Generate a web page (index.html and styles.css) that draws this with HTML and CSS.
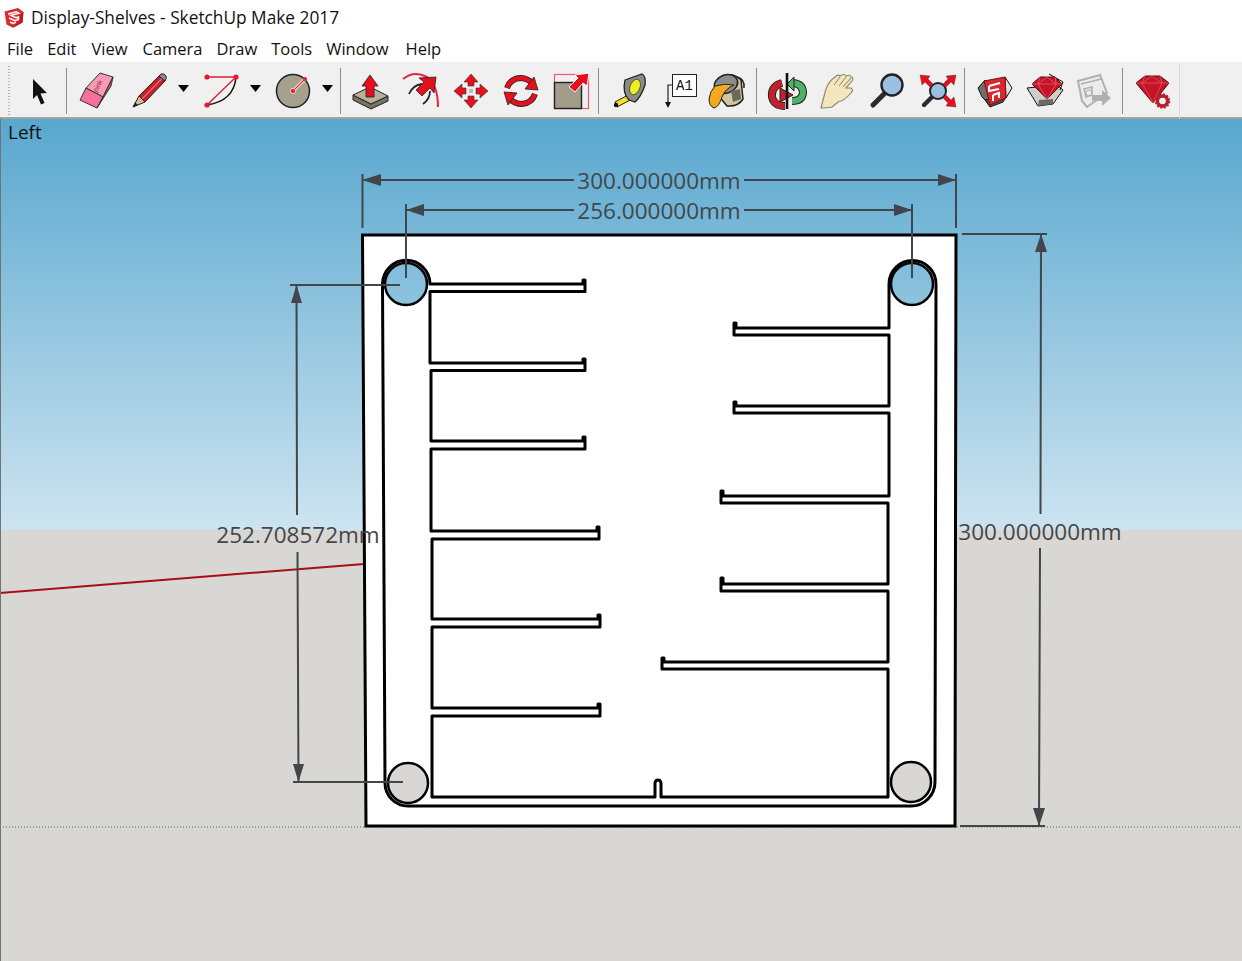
FILE: index.html
```html
<!DOCTYPE html>
<html lang="en">
<head>
<meta charset="utf-8">
<title>Display-Shelves - SketchUp Make 2017</title>
<link rel="stylesheet" href="styles.css">
</head>
<body>
<div class="app">
  <header class="titlebar">
    <svg class="logo" viewBox="0 0 20 20"><path d="M0.500 3.500 L14 0 L19.500 4 L18.500 14.500 L9 19.800 L2.500 16.500 Z" fill="#dc2a30"/><path d="M9 19.800 L18.500 14.500 L19.500 4 L16 6 L15 13 Z" fill="#b81c24"/><path d="M4 6 L12.500 3.800 L15 5.200 L7 7.400 L12 9.800 L14.500 9 V11.500 L11 12.800 L5 10 M6 14 L9 15.500 L12 14.300" fill="none" stroke="#fff" stroke-width="1.500"/></svg>
    <span>Display-Shelves - SketchUp Make 2017</span>
  </header>
  <nav class="menubar">
    <span class="m-file">File</span><span class="m-edit">Edit</span><span class="m-view">View</span><span class="m-camera">Camera</span><span class="m-draw">Draw</span><span class="m-tools">Tools</span><span class="m-window">Window</span><span class="m-help">Help</span>
  </nav>
  <div class="toolbar">
    <div class="gripper"></div>
    <svg class="tool t-select" viewBox="0 0 40 40"><path d="M14 8 L28 22 L21.5 22.5 L25.5 32 L22 33.5 L18 24 L14 28 Z" fill="#111"/></svg>
    <div class="sep s1"></div>
    <svg class="tool t-eraser" viewBox="0 0 40 40"><path d="M24 2 L37 6 L27 26 L10 17 Z" fill="#fb9ab4" stroke="#333"/><path d="M10 17 L27 26 L21 37 L4 29 Z" fill="#f6719a" stroke="#333"/><path d="M37 6 L35 15 L21 37 L27 26 Z" fill="#c9557a" stroke="#333"/><text class="pink" transform="translate(24 16) rotate(-62)">pink</text></svg>
    <svg class="tool t-pencil" viewBox="0 0 40 40"><path d="M9 25 L29 5 L35 10 L15 31 Z" fill="#c4202c" stroke="#222"/><path d="M12 28 L32 7.5" stroke="#e8616a" stroke-width="1.5"/><path d="M29 5 L31 3 Q34 2 36 5 Q37 7 35 10 Z" fill="#8d8d8d" stroke="#222"/><path d="M3 36 L9 25 L15 31 Z" fill="#d7bd8e" stroke="#222"/><path d="M3 36 L5 31.5 L8 34 Z" fill="#222"/></svg>
    <div class="drop d1"></div>
    <svg class="tool t-arc" viewBox="0 0 40 40"><path d="M5 6 H34 L5 34" fill="none" stroke="#e01b35" stroke-width="1.4"/><path d="M34 6 Q32 30 5 34" fill="none" stroke="#111" stroke-width="1.5"/><circle cx="5" cy="6" r="2.6" fill="#e01b35"/><circle cx="34" cy="6" r="2.6" fill="#e01b35"/><circle cx="5" cy="34" r="2.6" fill="#e01b35"/></svg>
    <div class="drop d2"></div>
    <svg class="tool t-circle" viewBox="0 0 40 40"><circle cx="20" cy="20" r="16.5" fill="#a5a18c" stroke="#222" stroke-width="1.5"/><path d="M20 20 L32 8" stroke="#fff" stroke-width="3"/><path d="M20 20 L32 8" stroke="#e01b35" stroke-width="1.3"/><circle cx="20" cy="20" r="2.6" fill="#e01b35" stroke="#fff" stroke-width=".7"/><circle cx="32" cy="8" r="2" fill="#e01b35"/></svg>
    <div class="drop d3"></div>
    <div class="sep s2"></div>
    <svg class="tool t-push" viewBox="0 0 40 40"><path d="M2 24 V29 L20 38 L37 30 V25 L20 33 Z" fill="#77745f" stroke="#222"/><path d="M2 24 L19 16 L37 25 L20 33 Z" fill="#b5b19b" stroke="#222"/><path d="M19 4 L27 15 L23 15 V26 L15 26 V15 L11 15 Z" fill="#e5101c" stroke="#222" stroke-width=".8"/></svg>
    <svg class="tool t-follow" viewBox="0 0 40 40"><path d="M1 8 Q12 -1 25 6 Q36 14 36 36" fill="none" stroke="#e8253c" stroke-width="2"/><path d="M7 23 Q11 14 20 13 M21 33 Q28 28 28 20" fill="none" stroke="#222" stroke-width="1.8"/><path d="M34 6 L32 22 L28 17 L20 25 L14 19 L22 11 L17 7 Z" fill="#e5101c" stroke="#222" stroke-width=".8"/></svg>
    <svg class="tool t-move" viewBox="0 0 40 40"><g fill="#e5101c" stroke="#333" stroke-width=".6"><path d="M20 3 L27 11 L23 11 V15 H17 V11 H13 Z"/><path d="M20 37 L27 29 L23 29 V25 H17 V29 H13 Z"/><path d="M3 20 L11 13 V17 H15 V23 H11 V27 Z"/><path d="M37 20 L29 13 V17 H25 V23 H29 V27 Z"/></g><rect x="18" y="18" width="4" height="4" fill="#bbb"/></svg>
    <svg class="tool t-rotate" viewBox="0 0 40 40"><path d="M6 17 Q9 8 19 7 Q26 7 31 12" fill="none" stroke="#222" stroke-width="6"/><path d="M6 17 Q9 8 19 7 Q26 7 31 12" fill="none" stroke="#e5101c" stroke-width="4.4"/><path d="M37 19 L24 18 L33 6 Z" fill="#e5101c" stroke="#222" stroke-width=".8"/><path d="M34 23 Q31 32 21 33 Q14 33 9 28" fill="none" stroke="#222" stroke-width="6"/><path d="M34 23 Q31 32 21 33 Q14 33 9 28" fill="none" stroke="#e5101c" stroke-width="4.4"/><path d="M3 21 L16 22 L7 34 Z" fill="#e5101c" stroke="#222" stroke-width=".8"/></svg>
    <svg class="tool t-scale" viewBox="0 0 40 40"><rect x="2.5" y="3.5" width="34" height="34" fill="none" stroke="#ec5a70" stroke-width="1.2"/><rect x="2.5" y="11.5" width="27" height="26" fill="#a19d88" stroke="#222" stroke-width="1.4"/><path d="M37 2 L35 15 L31 12 L23 21 L17 16 L26 7 L23 4 Z" fill="#e5101c" stroke="#fff" stroke-width="1"/></svg>
    <div class="sep s3"></div>
    <svg class="tool t-tape" viewBox="0 0 40 40"><path d="M5 31 L20 23 L22 28 L7 36 Z" fill="#f2e31c" stroke="#222"/><circle cx="6" cy="34" r="2.2" fill="#111"/><path d="M15 9 L32 3 Q36 5 35 14 Q31 26 25 31 L19 29 Q12 22 15 9 Z" fill="#8c8c84" stroke="#222" stroke-width="1.3"/><ellipse cx="25" cy="16" rx="5" ry="8" transform="rotate(22 25 16)" fill="#eef01e" stroke="#555"/></svg>
    <svg class="tool t-text" viewBox="0 0 40 40"><rect x="10.5" y="3.5" width="24" height="22" fill="#fff" stroke="#222"/><text class="a1" x="22.5" y="19">A1</text><path d="M10 14 H6 V31" fill="none" stroke="#222" stroke-width="1.2"/><path d="M3 31 H9 L6 37 Z" fill="#111"/></svg>
    <svg class="tool t-paint" viewBox="0 0 40 40"><path d="M15 5 Q27 1 34 9 L36 28 Q31 36 20 35 L11 24 Z" fill="#cfc7a2" stroke="#222" stroke-width="1.5"/><ellipse cx="19" cy="13" rx="12" ry="9" transform="rotate(-20 19 13)" fill="#8b8f8c" stroke="#222" stroke-width="1.5"/><path d="M30 6 Q38 8 37 17" fill="none" stroke="#222" stroke-width="1.5"/><path d="M8 15 Q18 12 27 14 Q18 18 15 26 Q12 36 7 37 Q2 35 2 28 Q3 20 8 15 Z" fill="#f4a81d" stroke="#222"/><path d="M24 20 L33 18 L34 28 L26 31 Z" fill="#6f6a55"/></svg>
    <div class="sep s4"></div>
    <svg class="tool t-orbit" viewBox="0 0 40 40"><path d="M26 12 Q36 13 36 22 Q35 30 25 30" fill="none" stroke="#222" stroke-width="8"/><path d="M26 12 Q36 13 36 22 Q35 30 25 30" fill="none" stroke="#4db268" stroke-width="6"/><path d="M27 6 V20 L20 13 Z" fill="#4db268" stroke="#222"/><path d="M15 12 Q4 15 5 26 Q7 35 18 35" fill="none" stroke="#222" stroke-width="8"/><path d="M15 12 Q4 15 5 26 Q7 35 18 35" fill="none" stroke="#c4202c" stroke-width="6"/><path d="M13 17 L26 24 L13 31 Z" fill="#c4202c" stroke="#222"/><path d="M20 2 V38" stroke="#111" stroke-width="2.6"/></svg>
    <svg class="tool t-pan" viewBox="0 0 40 40"><path d="M3 37 Q6 25 8 18 Q11 10 17 6 Q20 3 22 5 Q26 2 28 5 Q32 3 33 6 Q36 6 34 10 L28 17 L33 17 Q36 19 33 22 Q26 30 20 31 L14 36 Q8 37 3 37 Z" fill="#f3e5bd" stroke="#8a8468" stroke-width="1.1"/><path d="M16 14 L22 6 M21 15 L28 6 M25 16 L33 7" fill="none" stroke="#8a8468"/></svg>
    <svg class="tool t-zoom" viewBox="0 0 40 40"><path d="M17 23 L6 34" stroke="#2b2b2b" stroke-width="5" stroke-linecap="round"/><circle cx="25" cy="14" r="10.5" fill="#9cc0e2" stroke="#222" stroke-width="2.4"/></svg>
    <svg class="tool t-extents" viewBox="0 0 40 40"><path d="M14 26 L6 34" stroke="#2b2b2b" stroke-width="4.4" stroke-linecap="round"/><circle cx="20" cy="20" r="8" fill="#9cc0e2" stroke="#222" stroke-width="2"/><g fill="#e5101c" stroke="#333" stroke-width=".4"><path d="M2 4 L12 5 L10 8 L15 13 L12 16 L7 11 L4 14 Z"/><path d="M38 4 L28 5 L30 8 L25 13 L28 16 L33 11 L36 14 Z"/><path d="M38 36 L28 35 L30 32 L25 27 L28 24 L33 29 L36 26 Z"/></g></svg>
    <div class="sep s5"></div>
    <svg class="tool t-warehouse" viewBox="0 0 40 40"><path d="M3 17 L10 9 L15 34 L7 26 Z" fill="#6f6f6a" stroke="#111"/><path d="M30 6 L37 17 L31 27 Z" fill="#e6e4da" stroke="#111"/><path d="M10 29 L15 36 L28 31 L31 26 Z" fill="#55534a" stroke="#111"/><path d="M9 10 L30 6 L31 27 L15 34 Z" fill="#d8272e" stroke="#7a1116"/><path d="M14 15 L25 12 M14 15 V20 L24 18 M18 24 L24 22 V27 M18 24 V30" fill="none" stroke="#fff" stroke-width="2"/></svg>
    <svg class="tool t-extwh" viewBox="0 0 40 40"><path d="M2 17 L13 35 L28 33 L38 19 L32 14 Z" fill="#cfcfc8" stroke="#111"/><path d="M13 35 L28 33 V28 L14 29 Z" fill="#6a6a62"/><path d="M24 3 L38 11 L35 19" fill="none" stroke="#111"/><path d="M7 13 L15 6 H30 L37 13 L22 28 Z" fill="#c4142a" stroke="#511"/><path d="M7 13 H37 M15 6 L13 13 L22 28 L31 13 L30 6 M13 13 L22 6 L31 13" fill="none" stroke="#ef5a66" stroke-width=".8"/></svg>
    <svg class="tool t-share" viewBox="0 0 40 40"><path d="M3 10 L25 4 L32 22 L12 36 L7 30 Z" fill="#ebebeb" stroke="#b0b0b0" stroke-width="2"/><path d="M6 13 L26 8 M9 18 L17 16 V24 L11 26 Z" fill="none" stroke="#b0b0b0" stroke-width="1.6"/><circle cx="14" cy="22" r="3" fill="none" stroke="#b0b0b0"/><path d="M17 24 H27 V19 L36 27 L27 35 V30 H17 Z" fill="#b0b0b0"/></svg>
    <div class="sep s6"></div>
    <svg class="tool t-ruby" viewBox="0 0 40 40"><path d="M3 12 L12 5 H27 L36 12 L20 32 Z" fill="#c4142a" stroke="#5a0d14"/><path d="M3 12 H36 M12 5 L9 12 L20 32 L29 12 L27 5 M9 12 L19 5 L29 12" fill="none" stroke="#e9525e" stroke-width=".8"/><circle cx="29.5" cy="30" r="5" fill="#f0f0f0" stroke="#b6202b" stroke-width="3.4"/><circle cx="29.5" cy="30" r="7" fill="none" stroke="#b6202b" stroke-width="1.6" stroke-dasharray="2.2 1.5"/></svg>
    <div class="toolbar-end"></div>
  </div>
  <main class="viewport">
    <div class="scene-name">Left</div>
    <svg class="scene" viewBox="0 119 1242 842" aria-label="Display shelves model">
      <defs>
        <linearGradient id="sky" gradientUnits="userSpaceOnUse" x1="0" y1="118" x2="0" y2="530">
          <stop offset="0" stop-color="#58a7cf"/>
          <stop offset="1" stop-color="#cde4f0"/>
        </linearGradient>
      </defs>
      <rect x="0" y="118" width="1242" height="412" fill="url(#sky)"/>
      <rect x="0" y="530" width="1242" height="431" fill="#d8d7d3"/>
      <path class="axis-red" d="M0 593 L364 564"/>
      <path class="axis-green" d="M0 827 H1242"/>

      <path class="sheet" d="M362.5 235 H956 L955 826 H366 Z"/>
      <circle class="hole" cx="406" cy="284" r="21" fill="url(#sky)"/>
      <circle class="hole" cx="912" cy="284" r="21" fill="url(#sky)"/>
      <circle class="hole" cx="408" cy="783" r="20" fill="#d8d7d3"/>
      <circle class="hole" cx="911" cy="782" r="20" fill="#d8d7d3"/>

      <path class="outline" d="M382.500 284 A23.750 23.750 0 0 1 430 284 H583 V280 H585 V291.500 H430 V363 H583 V359 H585 V370.500 H431 V441 H583 V437 H585 V449 H431 V531 H597 V527 H599 V539 H432 V619 H598 V615 H600 V627 H432 V708 H598 V704 H600 V716 H432 V797 H655 V783 Q655.500 780 658 780 Q660.500 780 661 783 V797 H888 V669 H662 V658 H664 V662 H888 V591 H721 V578 H723 V584 H888 V503 H721 V491 H723 V496 H889 V413 H734 V402 H736 V406 H889 V335 H734 V323 H736 V328 H889 V284 A23.500 23.500 0 0 1 936 284 L935 782 A24 24 0 0 1 911 806 H408 A23 23 0 0 1 385 783 Z"/>

      <g class="dim">
        <path d="M362.500 174 V228 M956 174 V228"/>
        <path d="M362 180 H574 M744 180 H956"/>
        <path d="M406 204 V278 M912 204 V278"/>
        <path d="M406 210 H574 M744 210 H912"/>
        <path d="M290 285 H400 M293 782 H403"/>
        <path d="M296.500 285 L297 515 M297.500 552 L298.500 782"/>
        <path d="M962 234 H1047 M960 826 H1045"/>
        <path d="M1041 234 L1040.500 514 M1040 548 L1039 826"/>
      </g>
      <g class="arrow">
        <path d="M362 180 L381 174 V186 Z M956 180 L938 174 V186 Z"/>
        <path d="M406 210 L424 204 V216 Z M912 210 L894 204 V216 Z"/>
        <path d="M296.500 285 L291 303 H302 Z M298.500 782 L293 764 H304 Z"/>
        <path d="M1041 234 L1035 252 H1047 Z M1039 826 L1033 808 H1045 Z"/>
      </g>
      <text class="dim-text" x="659" y="188.500">300.000000mm</text>
      <text class="dim-text" x="659" y="218.500">256.000000mm</text>
      <text class="dim-text" x="298" y="543">252.708572mm</text>
      <text class="dim-text" x="1040" y="540">300.000000mm</text>
    </svg>
  </main>
</div>
</body>
</html>
```
FILE: styles.css
```css
* { box-sizing: border-box; }
html, body { margin: 0; padding: 0; height: 100%; overflow: hidden; background: #fff; }
body { font-family: "Open Sans", "Noto Sans", sans-serif; color: #111; }
.app { display: flex; flex-direction: column; height: 961px; width: 1242px; }

.titlebar { height: 35px; flex: none; display: flex; align-items: center; padding-left: 4px; gap: 7px; font-size: 17.3px; background: #fff; }
.logo { width: 20px; height: 20px; flex: none; }

.menubar { height: 27px; flex: none; display: flex; align-items: center; padding-left: 7px; font-size: 16.5px; background: #fff; }
.m-edit { margin-left: 14px; }
.m-view { margin-left: 15px; }
.m-camera { margin-left: 15px; }
.m-draw { margin-left: 14px; }
.m-tools { margin-left: 14px; }
.m-window { margin-left: 14px; }
.m-help { margin-left: 17px; }

.toolbar { height: 57px; flex: none; display: flex; align-items: center; background: #f0f0f0; border-bottom: 2px solid #a2a2a2; padding-top: 3px; position: relative; }
.gripper { position: absolute; left: 8px; top: 4px; bottom: 2px; width: 2px; background-image: linear-gradient(#b5b5b5 50%, transparent 50%); background-size: 2px 3px; }
.tool { width: 40px; height: 40px; flex: none; display: block; }
.sep { width: 1px; height: 46px; flex: none; background: #8c8c8c; }
.drop { width: 11px; height: 7px; flex: none; background: #000; clip-path: polygon(0 0, 100% 0, 50% 100%); margin-bottom: 5px; }
.toolbar-end { width: 1px; height: 57px; flex: none; background: #dcdcdc; margin-left: 6px; }

.t-select { margin-left: 19px; }
.s1 { margin-left: 7px; }
.t-eraser { margin-left: 9px; }
.t-pencil { margin-left: 14px; }
.d1 { margin-left: 8px; }
.t-arc { margin-left: 13px; }
.d2 { margin-left: 8px; }
.t-circle { margin-left: 12px; }
.d3 { margin-left: 9px; }
.s2 { margin-left: 7px; }
.t-push { margin-left: 10px; }
.t-follow { margin-left: 11px; }
.t-move { margin-left: 9px; }
.t-rotate { margin-left: 10px; }
.t-scale { margin-left: 11px; }
.s3 { margin-left: 6px; }
.t-tape { margin-left: 11px; }
.t-text { margin-left: 12px; }
.t-paint { margin-left: 5px; }
.s4 { margin-left: 9px; }
.t-orbit { margin-left: 10px; }
.t-pan { margin-left: 11px; }
.t-zoom { margin-left: 9px; }
.t-extents { margin-left: 11px; }
.s5 { margin-left: 6px; }
.t-warehouse { margin-left: 10px; }
.t-extwh { margin-left: 10px; }
.t-share { margin-left: 10px; }
.s6 { margin-left: 7px; }
.t-ruby { margin-left: 10px; }

.pink { font-family: "Liberation Sans", sans-serif; font-size: 7px; fill: #8a2b46; text-anchor: middle; }
.a1 { font-family: "Liberation Mono", monospace; font-size: 14px; fill: #111; text-anchor: middle; }

.viewport { flex: 1; position: relative; overflow: hidden; }
.viewport::before { content: ""; position: absolute; left: 0; top: 0; bottom: 0; width: 1px; background: #6f7478; z-index: 1; }
.scene { position: absolute; left: 0; top: 0; width: 1242px; height: 842px; display: block; }
.scene-name { position: absolute; left: 8px; top: 0; font-size: 19px; line-height: 26px; color: #111; z-index: 1; }

.axis-red { stroke: #a50f15; stroke-width: 2; fill: none; }
.axis-green { stroke: #1c8a2e; stroke-width: 1.2; stroke-dasharray: 1 2; fill: none; }
.sheet { fill: #fff; stroke: #000; stroke-width: 3; }
.hole { stroke: #000; stroke-width: 2.5; }
.outline { fill: none; stroke: #000; stroke-width: 3; stroke-linejoin: round; }
.dim path { stroke: #42464a; stroke-width: 2; fill: none; }
.arrow path { fill: #42464a; }
.dim-text { font-family: "Open Sans", "Noto Sans", sans-serif; font-size: 22.5px; fill: #42464a; text-anchor: middle; }
```
